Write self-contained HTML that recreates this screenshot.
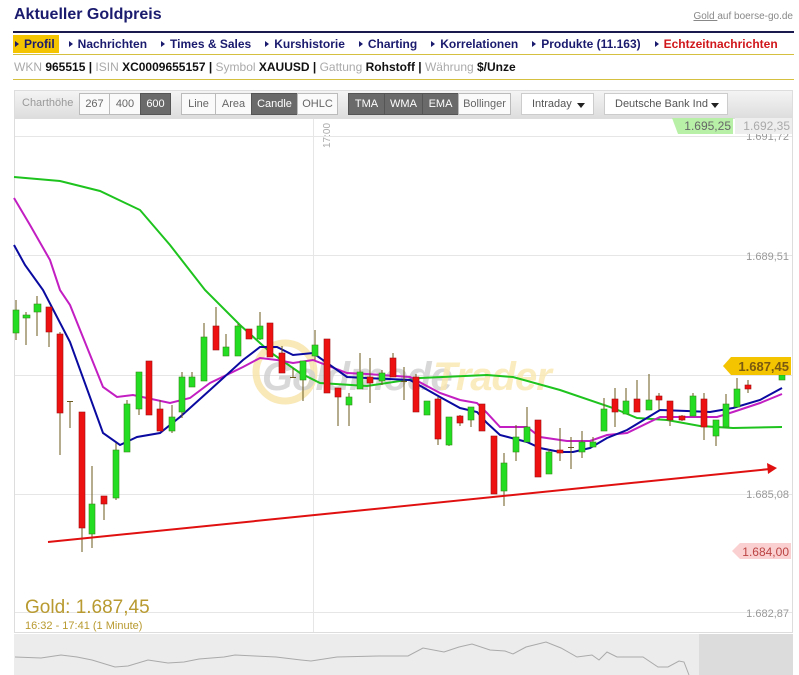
<!DOCTYPE html>
<html><head><meta charset="utf-8">
<style>
*{margin:0;padding:0;box-sizing:border-box}
body{width:799px;height:675px;overflow:hidden;background:#fff;font-family:"Liberation Sans",Arial,sans-serif;position:relative}
.abs{position:absolute;white-space:nowrap}
.title{left:14px;top:6px;font-size:16px;font-weight:bold;color:#1a1a6e}
.src{right:6px;top:11px;font-size:10px;color:#888}
.src u{color:#888}
.hr1{left:13px;top:31px;width:781px;height:2px;background:#1a1a4e}
.nav{left:13px;top:35px;height:18px;font-size:12px;font-weight:bold;color:#1a1a6e}
.nav span{display:inline-block;height:18px;line-height:18px;padding:0 4px 0 2px;margin-right:8px}
.nav span:before{content:"";display:inline-block;border-left:4px solid #1a1a6e;border-top:3.5px solid transparent;border-bottom:3.5px solid transparent;margin-right:5px;vertical-align:1px}
.nav .on{background:#f5c400}
.nav .red{color:#d0161b}
.hr2{left:13px;top:54px;width:781px;height:1px;background:#d6c040}
.info{left:14px;top:60px;font-size:12px;color:#111;font-weight:bold}
.info i{font-style:normal;font-weight:normal;color:#aaa}
.hr3{left:13px;top:79px;width:781px;height:1px;background:#d6c040}
.bar{left:14px;top:90px;width:779px;height:28px;background:linear-gradient(#f4f4f4,#dedede);border:1px solid #ddd}
.btn{position:absolute;top:93px;height:22px;line-height:20px;font-size:11px;color:#666;border:1px solid #bbb;background:#fafafa;text-align:center}
.btn.d{background:#6a6a6a;color:#fff;border-color:#555}
.dd{position:absolute;top:93px;height:22px;line-height:20px;font-size:11px;color:#555;border:1px solid #ccc;background:#fff;padding-left:10px}
.dd:after{content:"";position:absolute;right:8px;top:9px;border-top:5px solid #222;border-left:4px solid transparent;border-right:4px solid transparent}
</style></head><body>
<div class="abs title">Aktueller Goldpreis</div>
<div class="abs src"><u>Gold </u>auf boerse-go.de</div>
<div class="abs hr1"></div>
<div class="abs nav"><span class="on">Profil</span><span>Nachrichten</span><span>Times &amp; Sales</span><span>Kurshistorie</span><span>Charting</span><span>Korrelationen</span><span>Produkte (11.163)</span><span class="red">Echtzeitnachrichten</span></div>
<div class="abs hr2"></div>
<div class="abs info"><i>WKN</i> 965515 | <i>ISIN</i> XC0009655157 | <i>Symbol</i> XAUUSD | <i>Gattung</i> Rohstoff | <i>Währung</i> $/Unze</div>
<div class="abs hr3"></div>
<div class="abs bar"></div>
<div class="abs" style="left:22px;top:97px;font-size:11px;color:#999">Charthöhe</div>
<div class="btn" style="left:79px;width:31px">267</div>
<div class="btn" style="left:109px;width:32px">400</div>
<div class="btn d" style="left:140px;width:31px">600</div>
<div class="btn" style="left:181px;width:35px">Line</div>
<div class="btn" style="left:215px;width:37px">Area</div>
<div class="btn d" style="left:251px;width:47px">Candle</div>
<div class="btn" style="left:297px;width:41px">OHLC</div>
<div class="btn d" style="left:348px;width:37px">TMA</div>
<div class="btn d" style="left:384px;width:39px">WMA</div>
<div class="btn d" style="left:422px;width:37px">EMA</div>
<div class="btn" style="left:458px;width:53px">Bollinger</div>
<div class="dd" style="left:521px;width:73px">Intraday</div>
<div class="dd" style="left:604px;width:124px">Deutsche Bank Ind</div>

<svg class="abs" style="left:0;top:0" width="799" height="675" xmlns="http://www.w3.org/2000/svg">
<rect x="14.5" y="118.5" width="778" height="514" fill="none" stroke="#ddd"/>
<g stroke="#e6e6e6" stroke-width="1">
<line x1="15" y1="136.5" x2="792" y2="136.5"/><line x1="15" y1="255.5" x2="792" y2="255.5"/><line x1="15" y1="375.5" x2="792" y2="375.5"/><line x1="15" y1="494.5" x2="792" y2="494.5"/><line x1="15" y1="612.5" x2="792" y2="612.5"/>
<line x1="313.5" y1="119" x2="313.5" y2="632"/>
</g>
<text x="330" y="148" font-size="10" fill="#aaa" transform="rotate(-90 330 148)">17:00</text>
<g font-size="11" fill="#999" text-anchor="end">
<text x="789" y="140">1.691,72</text><text x="789" y="260">1.689,51</text><text x="789" y="498">1.685,08</text><text x="789" y="617">1.682,87</text>
</g>
<circle cx="285" cy="372" r="29" fill="none" stroke="#f8e4a8" stroke-width="7" opacity="0.8"/>
<text x="262" y="390" font-size="40" font-weight="bold" font-style="italic" fill="#cfcfcf" opacity="0.8" letter-spacing="-1">Goldmode</text>
<text x="433" y="390" font-size="40" font-weight="bold" font-style="italic" fill="#fbe8b0" opacity="0.8" letter-spacing="-1">Trader</text>
<polyline fill="none" stroke="#1ec31e" stroke-width="2" points="14,177 60,181 100,191 140,210 170,245 205,290 240,325 270,352 300,373 320,383 367,386 420,378 487,375 513,377 560,390 613,408 637,418 667,420 700,426 733,428 782,427"/>
<polyline fill="none" stroke="#c21ec2" stroke-width="2" points="14,198 30,225 50,260 60,290 70,305 103,387 117,397 133,395 170,403 190,398 210,383 243,367 260,358 277,360 293,363 313,360 347,373 367,374 410,377 440,393 460,400 477,403 487,413 500,427 527,427 540,437 567,441 590,441 607,435 627,433 660,417 687,417 717,417 733,412 760,403 782,394"/>
<polyline fill="none" stroke="#0a0aa0" stroke-width="2" points="14,245 25,265 43,290 70,342 103,433 120,445 137,437 160,433 180,417 210,390 243,360 260,347 277,347 293,355 313,353 347,377 367,378 410,380 440,397 460,408 477,412 487,423 500,435 527,442 540,448 560,452 573,452 590,448 607,438 627,430 660,410 687,411 710,412 733,408 760,400 782,388"/>
<g stroke="#6b5a1e" stroke-width="1">
<line x1="16" y1="300" x2="16" y2="340"/><line x1="26" y1="312" x2="26" y2="345"/><line x1="37" y1="296" x2="37" y2="336"/><line x1="49" y1="307" x2="49" y2="347"/><line x1="60" y1="332" x2="60" y2="455"/><line x1="70" y1="401" x2="70" y2="428"/><line x1="82" y1="412" x2="82" y2="552"/><line x1="92" y1="466" x2="92" y2="548"/><line x1="104" y1="496" x2="104" y2="520"/><line x1="116" y1="443" x2="116" y2="500"/><line x1="127" y1="400" x2="127" y2="452"/><line x1="139" y1="372" x2="139" y2="415"/><line x1="149" y1="361" x2="149" y2="415"/><line x1="160" y1="400" x2="160" y2="431"/><line x1="172" y1="405" x2="172" y2="433"/><line x1="182" y1="372" x2="182" y2="418"/><line x1="192" y1="372" x2="192" y2="387"/><line x1="204" y1="323" x2="204" y2="381"/><line x1="216" y1="307" x2="216" y2="350"/><line x1="226" y1="334" x2="226" y2="356"/><line x1="238" y1="324" x2="238" y2="356"/><line x1="249" y1="329" x2="249" y2="339"/><line x1="260" y1="312" x2="260" y2="340"/><line x1="270" y1="323" x2="270" y2="357"/><line x1="282" y1="346" x2="282" y2="373"/><line x1="293" y1="368" x2="293" y2="378"/><line x1="303" y1="361" x2="303" y2="401"/><line x1="315" y1="330" x2="315" y2="360"/><line x1="327" y1="339" x2="327" y2="393"/><line x1="338" y1="388" x2="338" y2="426"/><line x1="349" y1="393" x2="349" y2="426"/><line x1="360" y1="353" x2="360" y2="389"/><line x1="370" y1="358" x2="370" y2="403"/><line x1="382" y1="370" x2="382" y2="385"/><line x1="393" y1="353" x2="393" y2="377"/><line x1="404" y1="367" x2="404" y2="400"/><line x1="416" y1="374" x2="416" y2="412"/><line x1="427" y1="401" x2="427" y2="415"/><line x1="438" y1="397" x2="438" y2="445"/><line x1="449" y1="417" x2="449" y2="446"/><line x1="460" y1="415" x2="460" y2="426"/><line x1="471" y1="407" x2="471" y2="427"/><line x1="482" y1="404" x2="482" y2="431"/><line x1="494" y1="436" x2="494" y2="494"/><line x1="504" y1="453" x2="504" y2="506"/><line x1="516" y1="425" x2="516" y2="461"/><line x1="527" y1="407" x2="527" y2="442"/><line x1="538" y1="420" x2="538" y2="477"/><line x1="549" y1="449" x2="549" y2="474"/><line x1="560" y1="428" x2="560" y2="461"/><line x1="571" y1="437" x2="571" y2="469"/><line x1="582" y1="431" x2="582" y2="458"/><line x1="593" y1="437" x2="593" y2="447"/><line x1="604" y1="398" x2="604" y2="431"/><line x1="615" y1="388" x2="615" y2="427"/><line x1="626" y1="388" x2="626" y2="414"/><line x1="637" y1="380" x2="637" y2="412"/><line x1="649" y1="374" x2="649" y2="410"/><line x1="659" y1="393" x2="659" y2="410"/><line x1="670" y1="401" x2="670" y2="426"/><line x1="682" y1="415" x2="682" y2="421"/><line x1="693" y1="393" x2="693" y2="416"/><line x1="704" y1="393" x2="704" y2="440"/><line x1="716" y1="420" x2="716" y2="446"/><line x1="726" y1="394" x2="726" y2="427"/><line x1="737" y1="378" x2="737" y2="407"/><line x1="748" y1="380" x2="748" y2="393"/>
</g>
<g fill="#22dd22" stroke="#3a8a1a" stroke-width="0.6">
<rect x="13" y="310" width="6" height="23"/><rect x="23" y="315" width="7" height="3"/><rect x="34" y="304" width="7" height="8"/><rect x="89" y="504" width="6" height="30"/><rect x="113" y="450" width="6" height="48"/><rect x="124" y="404" width="6" height="48"/><rect x="136" y="372" width="6" height="37"/><rect x="169" y="417" width="6" height="14"/><rect x="179" y="377" width="6" height="35"/><rect x="189" y="377" width="6" height="10"/><rect x="201" y="337" width="6" height="44"/><rect x="223" y="347" width="6" height="9"/><rect x="235" y="326" width="6" height="30"/><rect x="257" y="326" width="6" height="13"/><rect x="300" y="361" width="6" height="19"/><rect x="312" y="345" width="6" height="11"/><rect x="346" y="397" width="6" height="8"/><rect x="357" y="372" width="6" height="17"/><rect x="379" y="373" width="6" height="8"/><rect x="424" y="401" width="6" height="14"/><rect x="446" y="417" width="6" height="28"/><rect x="468" y="407" width="6" height="13"/><rect x="501" y="463" width="6" height="28"/><rect x="513" y="437" width="6" height="15"/><rect x="524" y="427" width="6" height="15"/><rect x="546" y="452" width="6" height="22"/><rect x="579" y="442" width="6" height="10"/><rect x="590" y="442" width="6" height="5"/><rect x="601" y="409" width="6" height="22"/><rect x="623" y="401" width="6" height="13"/><rect x="646" y="400" width="6" height="10"/><rect x="690" y="396" width="6" height="20"/><rect x="713" y="420" width="6" height="16"/><rect x="723" y="404" width="6" height="23"/><rect x="734" y="389" width="6" height="18"/><rect x="779" y="375" width="6" height="5"/>
</g>
<g fill="#ee1111" stroke="#a01010" stroke-width="0.6">
<rect x="46" y="307" width="6" height="25"/><rect x="57" y="334" width="6" height="79"/><rect x="79" y="412" width="6" height="116"/><rect x="101" y="496" width="6" height="8"/><rect x="146" y="361" width="6" height="54"/><rect x="157" y="409" width="6" height="22"/><rect x="213" y="326" width="6" height="24"/><rect x="246" y="329" width="6" height="10"/><rect x="267" y="323" width="6" height="34"/><rect x="279" y="353" width="6" height="20"/><rect x="324" y="339" width="6" height="54"/><rect x="335" y="388" width="6" height="9"/><rect x="367" y="377" width="6" height="6"/><rect x="390" y="358" width="6" height="19"/><rect x="413" y="377" width="6" height="35"/><rect x="435" y="399" width="6" height="40"/><rect x="457" y="416" width="6" height="7"/><rect x="479" y="404" width="6" height="27"/><rect x="491" y="436" width="6" height="58"/><rect x="535" y="420" width="6" height="57"/><rect x="557" y="450" width="6" height="3"/><rect x="612" y="399" width="6" height="13"/><rect x="634" y="399" width="6" height="13"/><rect x="656" y="396" width="6" height="4"/><rect x="667" y="401" width="6" height="19"/><rect x="679" y="416" width="6" height="4"/><rect x="701" y="399" width="6" height="28"/><rect x="745" y="385" width="6" height="4"/>
</g>
<g stroke="#6b5a1e"><line x1="67" y1="401.5" x2="73" y2="401.5"/><line x1="290" y1="377.5" x2="296" y2="377.5"/><line x1="401" y1="381.5" x2="407" y2="381.5"/><line x1="568" y1="447.5" x2="574" y2="447.5"/></g>
<line x1="48" y1="542" x2="770" y2="469" stroke="#e01010" stroke-width="2"/>
<polygon points="777,468 767,463 768,474" fill="#e01010"/>
<polygon points="672,118 733,118 733,134 678,134" fill="#b8f0a8"/>
<text x="731" y="130" font-size="12" fill="#666" text-anchor="end">1.695,25</text>
<polygon points="735,118 792,118 792,134 735,134" fill="#eee"/>
<text x="790" y="130" font-size="12" fill="#aaa" text-anchor="end">1.692,35</text>
<polygon points="723,366 731,357 791,357 791,375 731,375" fill="#f5c400"/>
<text x="789" y="371" font-size="13" font-weight="bold" fill="#7a5a10" text-anchor="end">1.687,45</text>
<polygon points="732,551 740,543 791,543 791,559 740,559" fill="#fbd0d0"/>
<text x="789" y="556" font-size="12" fill="#b44" text-anchor="end">1.684,00</text>
<text x="25" y="613" font-size="19" fill="#b89a30">Gold: 1.687,45</text>
<text x="25" y="629" font-size="11" fill="#b89a30">16:32 - 17:41 (1 Minute)</text>
<rect x="14" y="634" width="779" height="41" fill="#ececec"/>
<rect x="699" y="634" width="94" height="41" fill="#dcdcdc"/>
<polyline fill="none" stroke="#aaa" stroke-width="1" points="15,657 41,658 61,655 77,657 92,660 115,667 128,666 148,660 168,663 184,662 199,659 224,657 235,655 255,656 276,657 301,660 311,661 337,657 378,656 408,656 423,648 444,652 459,647 472,644 490,650 505,651 513,654 526,647 546,642 561,648 577,657 592,655 599,660 607,652 617,657 643,657 658,667 668,667 679,661 684,662 689,675"/>
</svg>
</body></html>
